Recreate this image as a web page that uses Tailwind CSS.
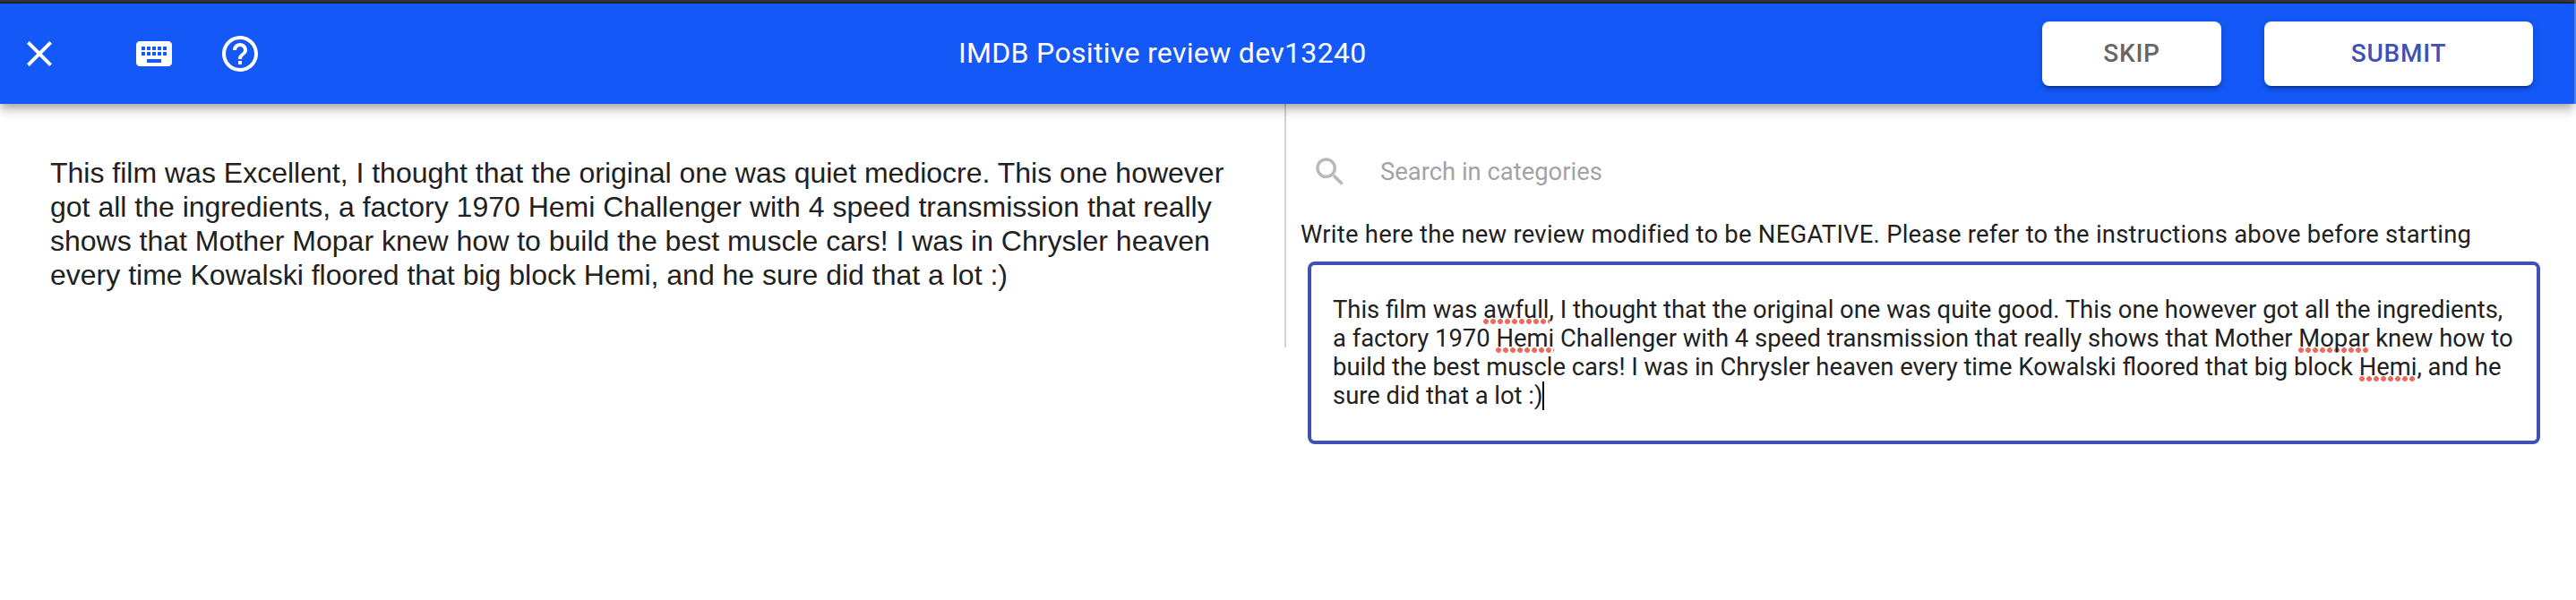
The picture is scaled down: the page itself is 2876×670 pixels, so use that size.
<!DOCTYPE html>
<html lang="en">
<head>
<meta charset="utf-8">
<title>IMDB Positive review dev13240</title>
<script src="https://cdn.jsdelivr.net/npm/@tailwindcss/browser@4"></script>
</head>
<body class="relative h-[670px] w-[2876px] overflow-hidden bg-white font-[Roboto,sans-serif] text-[#212121]">
  <div class="h-1 border-b-2 border-[#27272b] bg-[#34373b]"></div>
  <header class="relative z-10 flex h-28 w-[2874px] items-center bg-[#1459f7] text-white shadow-[0_4px_8px_-2px_rgba(0,0,0,0.2),0_8px_10px_0_rgba(0,0,0,0.14),0_2px_20px_0_rgba(0,0,0,0.12)]">
    <nav class="flex w-[1070px] items-center pl-5">
      <svg class="size-12" viewBox="0 0 24 24" fill="currentColor"><path d="M19 6.41L17.59 5 12 10.59 6.41 5 5 6.41 10.59 12 5 17.59 6.41 19 12 13.41 17.59 19 19 17.59 13.41 12z"/></svg>
      <svg class="ml-20 size-12" viewBox="0 0 24 24" fill="currentColor"><path d="M20 5H4c-1.1 0-1.99.9-1.99 2L2 17c0 1.100.9 2 2 2h16c1.100 0 2-.9 2-2V7c0-1.100-.9-2-2-2zm-9 3h2v2h-2V8zm0 3h2v2h-2v-2zM8 8h2v2H8V8zm0 3h2v2H8v-2zm-1 2H5v-2h2v2zm0-3H5V8h2v2zm9 7H8v-2h8v2zm0-4h-2v-2h2v2zm0-3h-2V8h2v2zm3 3h-2v-2h2v2zm0-3h-2V8h2v2z"/></svg>
      <svg class="ml-12 size-12" viewBox="0 0 24 24" fill="currentColor"><path d="M11 18h2v-2h-2v2zm1-16C6.480 2 2 6.480 2 12s4.480 10 10 10 10-4.480 10-10S17.520 2 12 2zm0 18c-4.410 0-8-3.590-8-8s3.590-8 8-8 8 3.590 8 8-3.590 8-8 8zm0-14c-2.210 0-4 1.790-4 4h2c0-1.100.9-2 2-2s2 .9 2 2c0 2-3 1.750-3 5h2c0-2.250 3-2.500 3-5 0-2.210-1.790-4-4-4z"/></svg>
    </nav>
    <h1 class="pb-0.5 text-[32px] leading-[48px] tracking-[0.01em] whitespace-nowrap">IMDB Positive review dev13240</h1>
    <div class="ml-auto flex gap-12 pr-[46px] text-[28px] font-medium tracking-[0.75px]">
      <button class="h-[72px] w-[200px] rounded-lg bg-white text-[#666666] shadow-[0_6px_2px_-4px_rgba(0,0,0,0.2),0_4px_4px_0_rgba(0,0,0,0.14),0_2px_10px_0_rgba(0,0,0,0.12)]">SKIP</button>
      <button class="h-[72px] w-[300px] rounded-lg bg-white text-[#3f51b5] shadow-[0_6px_2px_-4px_rgba(0,0,0,0.2),0_4px_4px_0_rgba(0,0,0,0.14),0_2px_10px_0_rgba(0,0,0,0.12)]">SUBMIT</button>
    </div>
  </header>
  <div class="absolute top-0 right-0 z-20 h-[116px] w-0.5 bg-[#4b80f9]"><div class="h-1 bg-[#5c5f62]"></div></div>
  <main class="flex items-start">
    <section class="h-[272px] w-[1436px] border-r-2 border-[#d3d3d3] pt-[58px] pl-14 font-['Liberation_Sans',sans-serif] text-[32px] leading-[38px] whitespace-nowrap">
      <p>This film was Excellent, I thought that the original one was quiet mediocre. This one however<br>got all the ingredients, a factory 1970 Hemi Challenger with 4 speed transmission that really<br>shows that Mother Mopar knew how to build the best muscle cars! I was in Chrysler heaven<br>every time Kowalski floored that big block Hemi, and he sure did that a lot :)</p>
    </section>
    <section class="w-[1440px] text-[27.4px] leading-8">
      <div class="flex items-center pt-[55px] pl-7">
        <svg class="size-[42px] text-[#b9b9b9]" viewBox="0 0 24 24" fill="currentColor"><path d="M15.500 14h-.79l-.28-.27C15.410 12.590 16 11.110 16 9.500 16 5.910 13.090 3 9.500 3S3 5.910 3 9.500 5.910 16 9.500 16c1.610 0 3.090-.59 4.230-1.570l.27.28v.79l5 4.990L20.490 19l-4.990-5zm-6 0C7.010 14 5 11.990 5 9.500S7.010 5 9.500 5 14 7.010 14 9.500 11.990 14 9.500 14z"/></svg>
        <span class="ml-[35px] text-[#a3a3a3]">Search in categories</span>
      </div>
      <p class="mt-[33px] ml-4 tracking-[0.00938em] whitespace-nowrap">Write here the new review modified to be NEGATIVE. Please refer to the instructions above before starting</p>
      <div class="mt-[14px] ml-6 h-[204px] w-[1376px] rounded-lg border-4 border-[#3f51b5] pt-[34px] pl-6 whitespace-nowrap">
        This film was <span class="bg-[radial-gradient(circle_at_3px_3px,#f0695e_2.6px,transparent_3.2px)] bg-[length:8px_6px] bg-left-bottom bg-repeat-x">awfull</span>, I thought that the original one was quite good. This one however got all the ingredients,<br>a factory 1970 <span class="bg-[radial-gradient(circle_at_3px_3px,#f0695e_2.6px,transparent_3.2px)] bg-[length:8px_6px] bg-left-bottom bg-repeat-x">Hemi</span> Challenger with 4 speed transmission that really shows that Mother <span class="bg-[radial-gradient(circle_at_3px_3px,#f0695e_2.6px,transparent_3.2px)] bg-[length:8px_6px] bg-left-bottom bg-repeat-x">Mopar</span> knew how to<br>build the best muscle cars! I was in Chrysler heaven every time Kowalski floored that big block <span class="bg-[radial-gradient(circle_at_3px_3px,#f0695e_2.6px,transparent_3.2px)] bg-[length:8px_6px] bg-left-bottom bg-repeat-x">Hemi</span>, and he<br>sure did that a lot :)<span class="-ml-px inline-block h-8 w-0.5 bg-black align-top"></span>
      </div>
    </section>
  </main>
</body>
</html>
